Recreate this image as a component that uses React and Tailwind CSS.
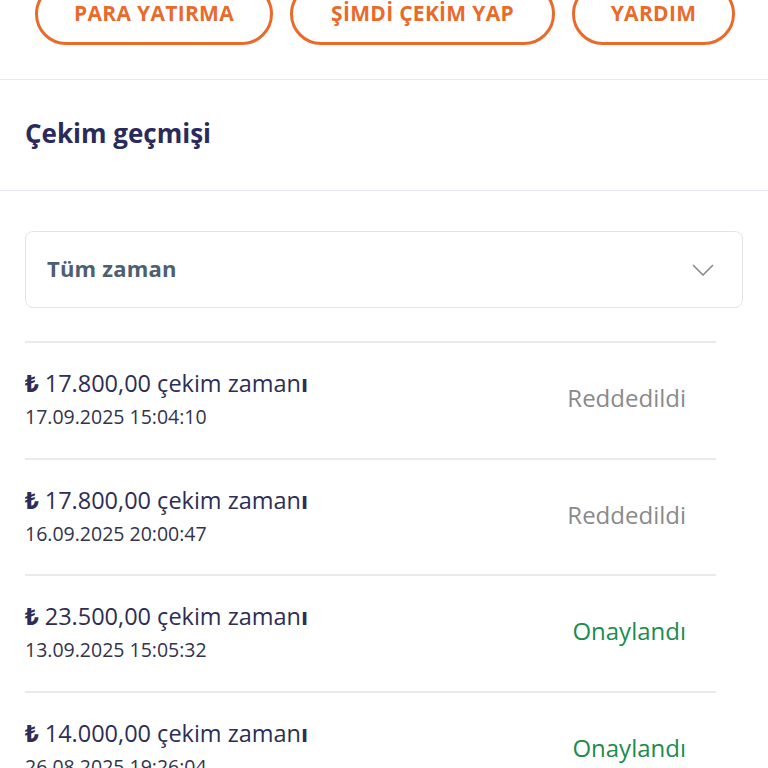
import React from "react";

const rows = [
  { amount: "17.800,00", date: "17.09.2025 15:04:10", status: "Reddedildi", ok: false },
  { amount: "17.800,00", date: "16.09.2025 20:00:47", status: "Reddedildi", ok: false },
  { amount: "23.500,00", date: "13.09.2025 15:05:32", status: "Onaylandı", ok: true },
  { amount: "14.000,00", date: "26.08.2025 19:26:04", status: "Onaylandı", ok: true },
];

function Btn({ w, children }) {
  return (
    <div
      className={`${w} h-[62px] shrink-0 rounded-full border-[3px] border-[#e96a2b] flex items-center justify-center text-[#e96a2b] font-bold text-[21px] tracking-[0.3px]`}
    >
      {children}
    </div>
  );
}

export default function App() {
  return (
    <div
      className="w-[768px] h-[768px] overflow-hidden bg-white"
      style={{ fontFamily: "'Open Sans', 'Noto Sans', sans-serif" }}
    >
      <div className="h-[80px] border-b border-[#e6e9ef] flex pl-[35px]">
        <div className="flex gap-[17px] mt-[-17px]">
          <Btn w="w-[238px]">PARA YATIRMA</Btn>
          <Btn w="w-[265px]">ŞİMDİ ÇEKİM YAP</Btn>
          <Btn w="w-[163px]">YARDIM</Btn>
        </div>
      </div>
      <div className="h-[111px] border-b border-[#e6e9ef] flex items-center pl-[25px]">
        <span className="text-[26px] font-bold text-[#2b2a5c] mt-[-4px]">Çekim geçmişi</span>
      </div>
      <div className="pl-[25px] pr-[25px] pt-[40px]">
        <div className="h-[77px] rounded-[8px] border border-[#e2e4e8] flex items-center justify-between pl-[21px] pr-[28px]">
          <span className="text-[22px] font-bold text-[#4e5f71] tracking-[0.2px] mt-[-3px]">Tüm zaman</span>
          <svg width="22" height="12" viewBox="0 0 22 12" fill="none">
            <path d="M1 1 L11 11 L21 1" stroke="#8a8a8a" strokeWidth="1.6" />
          </svg>
        </div>
        <div className="mt-[33px] w-[691px]">
          {rows.map((r, i) => (
            <div
              key={i}
              className="h-[116.7px] border-t-2 border-[#eaeaea] flex items-center justify-between pr-[30px]"
            >
              <div className="flex flex-col gap-[8px] mt-[-3px]">
                <div className="text-[23.5px] text-[#2e2d55] leading-[28px]">
                  <span className="font-extrabold">₺</span> {r.amount} çekim zaman<span className="font-bold">ı</span>
                </div>
                <div className="text-[19.5px] text-[#33334a] leading-[24px]">{r.date}</div>
              </div>
              <div className={`text-[24px] mt-[-5px] ${r.ok ? "text-[#1c8c4e]" : "text-[#8a8a8a]"}`}>
                {r.status}
              </div>
            </div>
          ))}
        </div>
      </div>
    </div>
  );
}
